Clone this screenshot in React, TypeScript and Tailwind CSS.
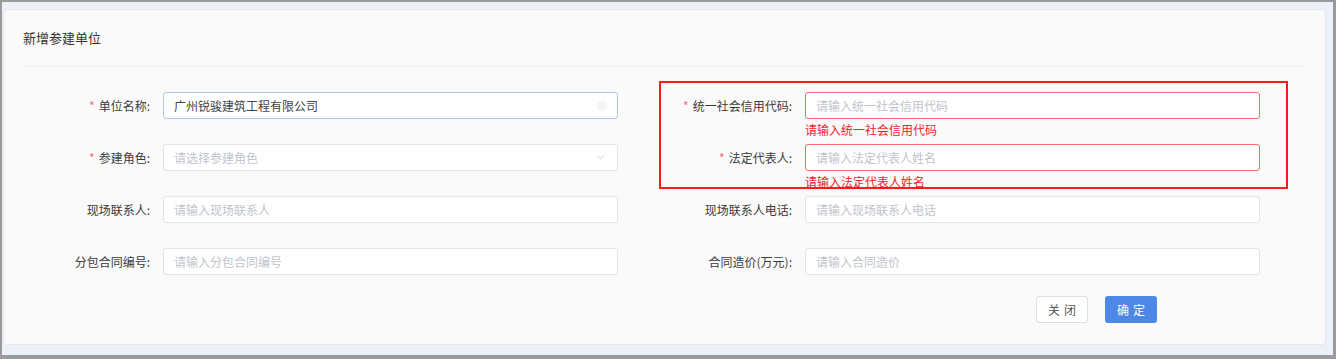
import { ChevronDown } from "lucide-react";

type field = {
  label: string;
  placeholder: string;
  required?: boolean;
  value?: string;
  error?: string;
  select?: boolean;
  focused?: boolean;
};

const leftFields: field[] = [
  { label: "单位名称", placeholder: "", required: true, value: "广州锐骏建筑工程有限公司", focused: true },
  { label: "参建角色", placeholder: "请选择参建角色", required: true, select: true },
  { label: "现场联系人", placeholder: "请输入现场联系人" },
  { label: "分包合同编号", placeholder: "请输入分包合同编号" },
];

const rightFields: field[] = [
  { label: "统一社会信用代码", placeholder: "请输入统一社会信用代码", required: true, error: "请输入统一社会信用代码" },
  { label: "法定代表人", placeholder: "请输入法定代表人姓名", required: true, error: "请输入法定代表人姓名" },
  { label: "现场联系人电话", placeholder: "请输入现场联系人电话" },
  { label: "合同造价(万元)", placeholder: "请输入合同造价" },
];

const FormItem = ({ f }: { f: field }) => {
  const border = f.error
    ? "border-[#f56c6c]"
    : f.focused
    ? "border-[#a9c8ef]"
    : "border-[#e2e4e8]";
  return (
    <div className="flex items-start h-[52px]">
      <label className="w-[129px] h-[27px] flex items-center justify-end pr-[2px] text-[12px] text-[#3a3a3a] shrink-0">
        {f.required && <span className="text-[#f56c6c] mr-[4px]">*</span>}
        {f.label}:
      </label>
      <div className="ml-[11px] w-[455px] relative">
        <div
          className={`h-[27px] rounded-[3px] border ${border} bg-white flex items-center px-[10px] text-[12px]`}
        >
          {f.value ? (
            <span className="text-[#444]">{f.value}</span>
          ) : (
            <span className="text-[#c0c4cc]">{f.placeholder}</span>
          )}
          {f.select && <ChevronDown className="ml-auto w-[13px] h-[13px] text-[#c8cbd0]" strokeWidth={1.5} />}
          {f.focused && <span className="ml-auto w-[10px] h-[10px] rounded-full bg-[#f3f4f6]" />}
        </div>
        {f.error && (
          <div className="absolute left-0 top-[31px] text-[12px] leading-[14px] text-[#f5222d]">{f.error}</div>
        )}
      </div>
    </div>
  );
};

export default function App() {
  return (
    <div
      className="w-[1336px] h-[359px] bg-[#9a9a9a] pt-[2px] pl-[2px] pr-[3px] pb-[4px]"
      style={{ fontFamily: '"Noto Sans CJK SC", "Noto Sans", sans-serif' }}
    >
      <div className="h-full bg-[#ebf0f9] pt-[7px] pl-[1px] pr-[7px]">
        <div className="relative h-[336px] bg-[#fafafa] border border-[#e4e6ea] rounded-[4px] px-[19px]">
          <div className="h-[57px] border-b border-[#eeeff2] flex items-center text-[13px] text-[#333]">
            新增参建单位
          </div>
          <div className="flex pt-[25px]">
            <div className="flex flex-col">
              {leftFields.map((f) => (
                <FormItem key={f.label} f={f} />
              ))}
            </div>
            <div className="flex flex-col ml-[47px]">
              {rightFields.map((f) => (
                <FormItem key={f.label} f={f} />
              ))}
            </div>
          </div>
          <div className="flex justify-end gap-[17px] pr-[149px] mt-[-4px]">
            <button className="w-[52px] h-[27px] rounded-[3px] border border-[#dcdfe6] bg-white text-[12px] text-[#555] tracking-[4px] pl-[4px]">
              关闭
            </button>
            <button className="w-[52px] h-[27px] rounded-[3px] bg-[#4d88e6] text-[12px] text-white tracking-[4px] pl-[4px]">
              确定
            </button>
          </div>
          <div className="absolute left-[655px] top-[71px] w-[629px] h-[108px] border-2 border-[#ff1a1a] pointer-events-none" />
        </div>
      </div>
    </div>
  );
}
